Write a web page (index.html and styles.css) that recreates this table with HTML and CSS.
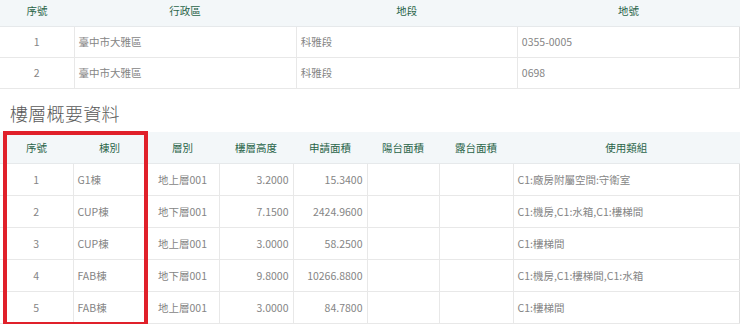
FILE: index.html
```html
<!DOCTYPE html>
<html lang="zh-Hant">
<head>
<meta charset="utf-8">
<title>地籍與樓層資料</title>
<link rel="stylesheet" href="styles.css">
</head>
<body>
<div class="page">
  <div class="scroll-top">
    <table class="grid land">
      <colgroup>
        <col class="w74"><col class="w222"><col class="w221"><col class="w222">
      </colgroup>
      <thead>
        <tr><th>序號</th><th>行政區</th><th>地段</th><th>地號</th></tr>
      </thead>
      <tbody>
        <tr><td class="c">1</td><td>臺中市大雅區</td><td>科雅段</td><td>0355-0005</td></tr>
        <tr><td class="c">2</td><td>臺中市大雅區</td><td>科雅段</td><td>0698</td></tr>
      </tbody>
    </table>
  </div>

  <h2 class="section-title">樓層概要資料</h2>

  <div class="floor-wrap">
    <table class="grid floor">
      <colgroup>
        <col class="w73"><col class="w73"><col class="w73"><col class="w74"><col class="w74"><col class="w72"><col class="w74"><col>
      </colgroup>
      <thead>
        <tr><th>序號</th><th>棟別</th><th>層別</th><th>樓層高度</th><th>申請面積</th><th>陽台面積</th><th>露台面積</th><th>使用類組</th></tr>
      </thead>
      <tbody>
        <tr><td class="c">1</td><td>G1棟</td><td class="c">地上層001</td><td class="r">3.2000</td><td class="r">15.3400</td><td></td><td></td><td>C1:廠房附屬空間:守衛室</td></tr>
        <tr><td class="c">2</td><td>CUP棟</td><td class="c">地下層001</td><td class="r">7.1500</td><td class="r">2424.9600</td><td></td><td></td><td>C1:機房,C1:水箱,C1:樓梯間</td></tr>
        <tr><td class="c">3</td><td>CUP棟</td><td class="c">地上層001</td><td class="r">3.0000</td><td class="r">58.2500</td><td></td><td></td><td>C1:樓梯間</td></tr>
        <tr><td class="c">4</td><td>FAB棟</td><td class="c">地下層001</td><td class="r">9.8000</td><td class="r">10266.8800</td><td></td><td></td><td>C1:機房,C1:樓梯間,C1:水箱</td></tr>
        <tr><td class="c">5</td><td>FAB棟</td><td class="c">地上層001</td><td class="r">3.0000</td><td class="r">84.7800</td><td></td><td></td><td>C1:樓梯間</td></tr>
      </tbody>
    </table>
    <div class="highlight" aria-hidden="true"></div>
  </div>
</div>
</body>
</html>
```
FILE: styles.css
```css
* { box-sizing: border-box; }
html, body {
  margin: 0;
  padding: 0;
  background: #ffffff;
}
body {
  font-family: "Noto Sans CJK TC", "Noto Sans", sans-serif;
  font-size: 10.5px;
  color: #858585;
  overflow: hidden;
}
.page {
  width: 740px;
}
.scroll-top {
  margin-top: -5px;
}
.grid {
  width: 740px;
  border-collapse: collapse;
  table-layout: fixed;
}
.grid th {
  background: #f3f7f9;
  color: #2a6549;
  font-weight: 400;
  text-align: center;
  padding: 0 4px;
  border-bottom: 1px solid #e6e9eb;
}
.grid td {
  padding: 0 4px;
  border: 1px solid #e8e8e8;
  border-top: none;
  white-space: nowrap;
}
.grid td:first-child { border-left: none; }
.grid td:last-child { border-right: 1px solid #dedede; }
.grid .c { text-align: center; }
.grid .r { text-align: right; }

.land th { height: 31px; }
.land td { height: 31px; }

.w74 { width: 74px; }
.w222 { width: 222px; }
.w221 { width: 221px; }
.w73 { width: 73px; }
.w72 { width: 72px; }

.section-title {
  margin: 12px 0 7px;
  padding-left: 10px;
  font-size: 18px;
  line-height: 24px;
  font-weight: 300;
  color: #5a5a5a;
  letter-spacing: 0.3px;
}

.floor-wrap {
  position: relative;
}
.floor th { height: 32px; }
.floor td { height: 32px; }

.highlight {
  position: absolute;
  left: 3px;
  top: -1px;
  width: 145px;
  height: 195px;
  border: 4px solid #e0202a;
  pointer-events: none;
}
```
